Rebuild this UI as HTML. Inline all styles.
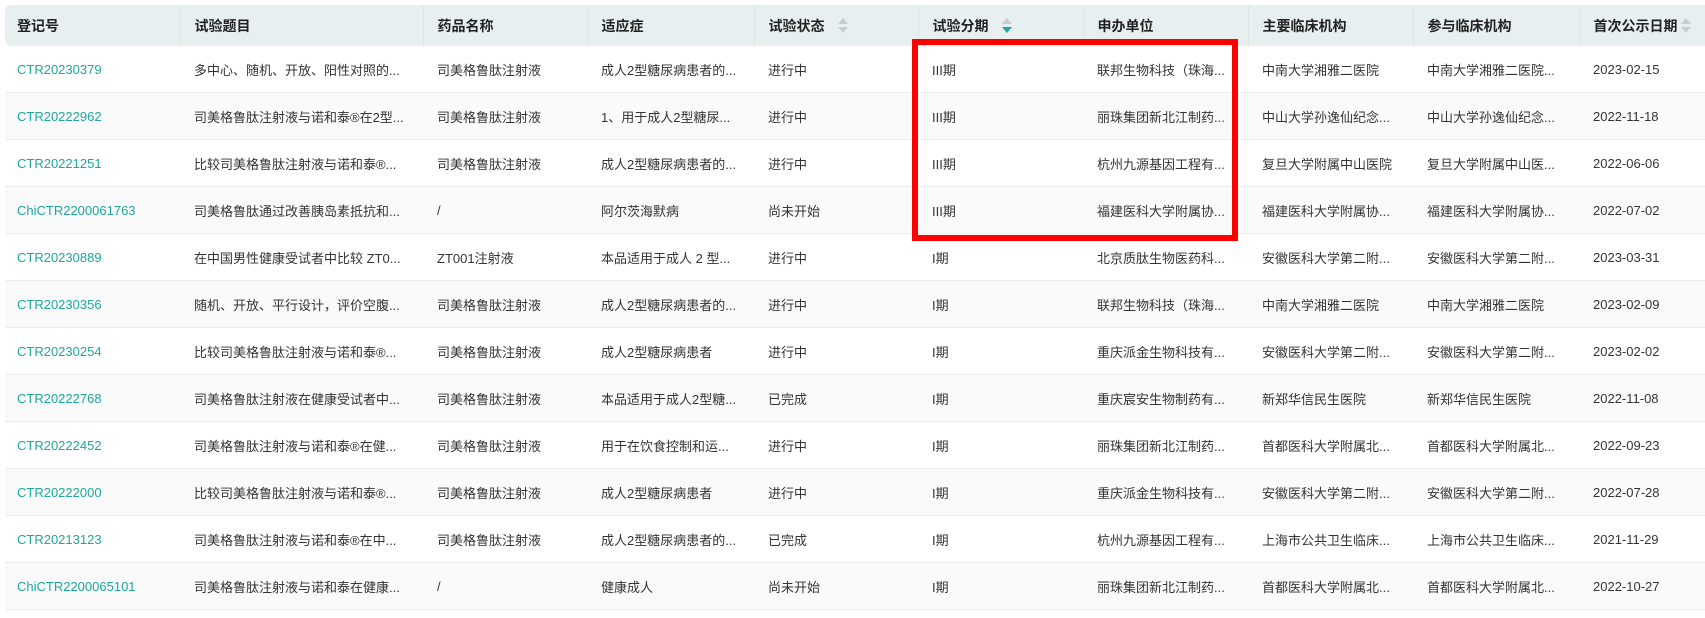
<!DOCTYPE html>
<html><head><meta charset="utf-8"><style>
body{margin:0;width:1705px;height:618px;background:#fff;overflow:hidden;font-family:"Liberation Sans","Noto Sans CJK SC",sans-serif;}
.wrap{position:absolute;left:5px;top:5px;width:1700px;}
table{border-collapse:collapse;table-layout:fixed;width:1700px;}
th{background:#e7eff0;height:41px;text-align:left;font-size:14px;font-weight:bold;color:#222;padding:0 0 0 14px;border-left:1px solid #d9e6e7;white-space:nowrap;position:relative;}
th:first-child{border-left:none;border-radius:6px 0 0 6px;padding-left:12px;}
td{height:46px;font-size:13px;color:#333;padding:0 0 0 14px;white-space:nowrap;overflow:hidden;border-bottom:1px solid #ececf0;}
td:first-child{padding-left:12px;color:#1ea79c;}
tr.alt td{background:#fafafa;}
.s{position:absolute;top:13px;width:10px;height:16px;}
.s:before{content:"";position:absolute;left:0;top:0;border-left:5px solid transparent;border-right:5px solid transparent;border-bottom:6px solid #c9cdd0;}
.s:after{content:"";position:absolute;left:0;top:9px;border-left:5px solid transparent;border-right:5px solid transparent;border-top:6px solid #c9cdd0;}
.s.on:after{border-top-color:#1ea79c;}
.red{position:absolute;left:912px;top:39px;width:314px;height:190px;border:6px solid #f00;}
</style></head><body>
<div class="wrap"><table>
<colgroup><col style="width:175px"><col style="width:243px"><col style="width:164px"><col style="width:167px"><col style="width:164px"><col style="width:165px"><col style="width:165px"><col style="width:165px"><col style="width:166px"><col style="width:126px"></colgroup>
<tr><th>登记号</th><th>试验题目</th><th>药品名称</th><th>适应症</th><th>试验状态<span class="s" style="left:83px"></span></th><th>试验分期<span class="s on" style="left:83px"></span></th><th>申办单位</th><th>主要临床机构</th><th>参与临床机构</th><th>首次公示日期<span class="s" style="left:101px"></span></th></tr>
<tr><td>CTR20230379</td><td>多中心、随机、开放、阳性对照的...</td><td>司美格鲁肽注射液</td><td>成人2型糖尿病患者的...</td><td>进行中</td><td>III期</td><td>联邦生物科技（珠海...</td><td>中南大学湘雅二医院</td><td>中南大学湘雅二医院...</td><td>2023-02-15</td></tr>
<tr class="alt"><td>CTR20222962</td><td>司美格鲁肽注射液与诺和泰®在2型...</td><td>司美格鲁肽注射液</td><td>1、用于成人2型糖尿...</td><td>进行中</td><td>III期</td><td>丽珠集团新北江制药...</td><td>中山大学孙逸仙纪念...</td><td>中山大学孙逸仙纪念...</td><td>2022-11-18</td></tr>
<tr><td>CTR20221251</td><td>比较司美格鲁肽注射液与诺和泰®...</td><td>司美格鲁肽注射液</td><td>成人2型糖尿病患者的...</td><td>进行中</td><td>III期</td><td>杭州九源基因工程有...</td><td>复旦大学附属中山医院</td><td>复旦大学附属中山医...</td><td>2022-06-06</td></tr>
<tr class="alt"><td>ChiCTR2200061763</td><td>司美格鲁肽通过改善胰岛素抵抗和...</td><td>/</td><td>阿尔茨海默病</td><td>尚未开始</td><td>III期</td><td>福建医科大学附属协...</td><td>福建医科大学附属协...</td><td>福建医科大学附属协...</td><td>2022-07-02</td></tr>
<tr><td>CTR20230889</td><td>在中国男性健康受试者中比较 ZT0...</td><td>ZT001注射液</td><td>本品适用于成人 2 型...</td><td>进行中</td><td>I期</td><td>北京质肽生物医药科...</td><td>安徽医科大学第二附...</td><td>安徽医科大学第二附...</td><td>2023-03-31</td></tr>
<tr class="alt"><td>CTR20230356</td><td>随机、开放、平行设计，评价空腹...</td><td>司美格鲁肽注射液</td><td>成人2型糖尿病患者的...</td><td>进行中</td><td>I期</td><td>联邦生物科技（珠海...</td><td>中南大学湘雅二医院</td><td>中南大学湘雅二医院</td><td>2023-02-09</td></tr>
<tr><td>CTR20230254</td><td>比较司美格鲁肽注射液与诺和泰®...</td><td>司美格鲁肽注射液</td><td>成人2型糖尿病患者</td><td>进行中</td><td>I期</td><td>重庆派金生物科技有...</td><td>安徽医科大学第二附...</td><td>安徽医科大学第二附...</td><td>2023-02-02</td></tr>
<tr class="alt"><td>CTR20222768</td><td>司美格鲁肽注射液在健康受试者中...</td><td>司美格鲁肽注射液</td><td>本品适用于成人2型糖...</td><td>已完成</td><td>I期</td><td>重庆宸安生物制药有...</td><td>新郑华信民生医院</td><td>新郑华信民生医院</td><td>2022-11-08</td></tr>
<tr><td>CTR20222452</td><td>司美格鲁肽注射液与诺和泰®在健...</td><td>司美格鲁肽注射液</td><td>用于在饮食控制和运...</td><td>进行中</td><td>I期</td><td>丽珠集团新北江制药...</td><td>首都医科大学附属北...</td><td>首都医科大学附属北...</td><td>2022-09-23</td></tr>
<tr class="alt"><td>CTR20222000</td><td>比较司美格鲁肽注射液与诺和泰®...</td><td>司美格鲁肽注射液</td><td>成人2型糖尿病患者</td><td>进行中</td><td>I期</td><td>重庆派金生物科技有...</td><td>安徽医科大学第二附...</td><td>安徽医科大学第二附...</td><td>2022-07-28</td></tr>
<tr><td>CTR20213123</td><td>司美格鲁肽注射液与诺和泰®在中...</td><td>司美格鲁肽注射液</td><td>成人2型糖尿病患者的...</td><td>已完成</td><td>I期</td><td>杭州九源基因工程有...</td><td>上海市公共卫生临床...</td><td>上海市公共卫生临床...</td><td>2021-11-29</td></tr>
<tr class="alt"><td>ChiCTR2200065101</td><td>司美格鲁肽注射液与诺和泰在健康...</td><td>/</td><td>健康成人</td><td>尚未开始</td><td>I期</td><td>丽珠集团新北江制药...</td><td>首都医科大学附属北...</td><td>首都医科大学附属北...</td><td>2022-10-27</td></tr>
</table></div>
<div class="red"></div>
</body></html>
